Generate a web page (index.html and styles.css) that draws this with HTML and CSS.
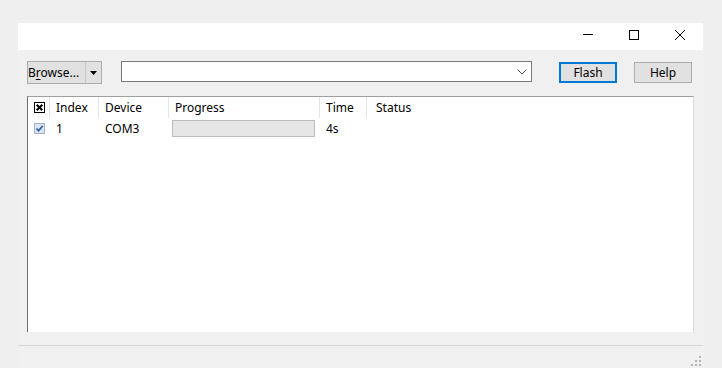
FILE: index.html
```html
<!DOCTYPE html>
<html>
<head>
<meta charset="utf-8">
<link rel="stylesheet" href="styles.css">
</head>
<body>
<div class="window">
  <div class="titlebar">
    <div class="tb-btn"><svg width="10" height="10" viewBox="0 0 10 10"><line x1="0" y1="4.5" x2="10" y2="4.5" stroke="#000" stroke-width="1"/></svg></div>
    <div class="tb-btn"><svg width="10" height="10" viewBox="0 0 10 10"><rect x="0.5" y="0.5" width="9" height="9" fill="none" stroke="#000" stroke-width="1"/></svg></div>
    <div class="tb-btn"><svg width="10" height="10" viewBox="0 0 10 10"><path d="M0 0 L10 10 M10 0 L0 10" stroke="#000" stroke-width="1" fill="none"/></svg></div>
  </div>
  <div class="client">
    <div class="toolbar">
      <div class="split">
        <div class="split-main">B<u>r</u>owse...</div>
        <div class="split-drop"><svg width="7" height="4" viewBox="0 0 7 4"><path d="M0 0 H7 L3.5 4 Z" fill="#000"/></svg></div>
      </div>
      <div class="combo"><svg width="10" height="6" viewBox="0 0 10 6"><path d="M0.5 0.5 L5 5 L9.5 0.5" fill="none" stroke="#555" stroke-width="1"/></svg></div>
      <div class="btn btn-default">Flash</div>
      <div class="btn btn-help">Help</div>
    </div>
    <div class="list">
      <div class="grid header">
        <div class="cell c-check"><svg width="11" height="11" viewBox="0 0 11 11"><rect x="0.5" y="0.5" width="10" height="10" fill="#fff" stroke="#000"/><path d="M2.7 2.7 L8.3 8.3 M8.3 2.7 L2.7 8.3" stroke="#000" stroke-width="2"/></svg></div>
        <div class="cell c-index">Index</div>
        <div class="cell c-device">Device</div>
        <div class="cell c-progress">Progress</div>
        <div class="cell c-time">Time</div>
        <div class="cell c-status">Status</div>
      </div>
      <div class="grid row">
        <div class="cell c-check"><svg width="11" height="11" viewBox="0 0 11 11"><rect x="0.5" y="0.5" width="10" height="10" fill="#dbe4f1" stroke="#9fb0c8"/><path d="M2.5 5.5 L4.6 7.8 L8.6 3" fill="none" stroke="#2a5ca3" stroke-width="1.7"/></svg></div>
        <div class="cell c-index">1</div>
        <div class="cell c-device">COM3</div>
        <div class="cell c-progress"><div class="progress"></div></div>
        <div class="cell c-time">4s</div>
        <div class="cell c-status"></div>
      </div>
    </div>
  </div>
  <div class="statusbar">
    <svg class="grip" width="11" height="11" viewBox="0 0 11 11">
      <rect x="8" y="0" width="2" height="2" fill="#b4b4b4"/>
      <rect x="4" y="4" width="2" height="2" fill="#b4b4b4"/>
      <rect x="8" y="4" width="2" height="2" fill="#b4b4b4"/>
      <rect x="0" y="8" width="2" height="2" fill="#b4b4b4"/>
      <rect x="4" y="8" width="2" height="2" fill="#b4b4b4"/>
      <rect x="8" y="8" width="2" height="2" fill="#b4b4b4"/>
    </svg>
  </div>
</div>
</body>
</html>
```
FILE: styles.css
```css
* { box-sizing: border-box; }
html, body { margin: 0; padding: 0; }
body {
  background: #efefef;
  font-family: "Noto Sans", "Open Sans", sans-serif;
  font-size: 12px;
  color: #000;
  width: 722px;
  height: 368px;
  overflow: hidden;
}
.window {
  margin: 23px 0 0 18px;
  width: 685px;
  height: 345px;
  background: #f0f0f0;
  display: flex;
  flex-direction: column;
}
.titlebar {
  height: 27px;
  flex: none;
  background: #fff;
  display: flex;
  justify-content: flex-end;
}
.tb-btn {
  width: 46px;
  height: 27px;
  display: flex;
  justify-content: center;
  align-items: flex-start;
  padding-top: 7px;
}
.tb-btn svg { display: block; }
.client {
  flex: none;
  padding: 11px 9px 0 9px;
  height: 295px;
  display: flex;
  flex-direction: column;
}
.toolbar {
  height: 23px;
  flex: none;
  display: flex;
  align-items: flex-start;
}
.split {
  width: 75px;
  height: 23px;
  display: flex;
  border: 1px solid #adadad;
  background: #e1e1e1;
}
.split-main {
  width: 58px;
  line-height: 21px;
  white-space: nowrap;
  overflow: hidden;
  border-right: 1px solid #c8c8c8;
}
.split-main u { text-underline-offset: 2px; }
.split-drop {
  flex: 1;
  display: flex;
  align-items: center;
  justify-content: center;
}
.split-drop svg { display: block; }
.combo {
  margin-left: 19px;
  width: 411px;
  height: 21px;
  background: #fff;
  border: 1px solid #7a7a7a;
  display: flex;
  justify-content: flex-end;
  align-items: center;
  padding-right: 4px;
}
.combo svg { display: block; }
.btn {
  margin-top: 1px;
  width: 58px;
  height: 21px;
  background: #e1e1e1;
  border: 1px solid #adadad;
  display: flex;
  align-items: center;
  justify-content: center;
  line-height: 1;
}
.btn-default {
  margin-left: 27px;
  border: 2px solid #0078d7;
}
.btn-help { margin-left: 17px; }
.list {
  flex: none;
  margin-top: 12px;
  width: 667px;
  height: 236px;
  background: #fff;
  border-left: 1px solid #6e6e6e;
  border-top: 1px solid #a0a0a0;
  border-right: 1px solid #dcdcdc;
}
.grid {
  display: grid;
  grid-template-columns: 22px 49px 70px 151px 47px 1fr;
}
.header { height: 21px; }
.header .cell {
  border-right: 1px solid #e5e5e5;
}
.header .cell:last-child { border-right: none; }
.row { height: 20px; }
.cell {
  display: flex;
  align-items: center;
  white-space: nowrap;
}
.c-check { padding-left: 6px; }
.c-check svg { display: block; }
.c-index { padding-left: 6px; }
.c-device { padding-left: 6px; }
.c-progress { padding-left: 6px; }
.row .c-progress { padding-left: 3px; }
.c-time { padding-left: 6px; }
.c-status { padding-left: 9px; }
.progress {
  width: 143px;
  height: 17px;
  background: #e6e6e6;
  border: 1px solid #bcbcbc;
}
.statusbar {
  flex: 1;
  border-top: 1px solid #d7d7d7;
  display: flex;
  justify-content: flex-end;
  align-items: flex-end;
  padding: 0 1px 1px 0;
}
.grip { display: block; }
```
